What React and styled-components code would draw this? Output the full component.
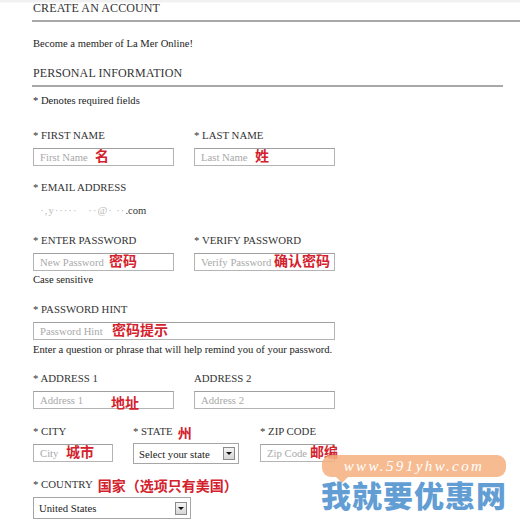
import React from 'react';
import styled, { createGlobalStyle } from 'styled-components';

const GlobalStyle = createGlobalStyle`
  html, body {
    margin: 0;
    padding: 0;
    background: #ffffff;
  }
`;

const Page = styled.div`
  position: relative;
  width: 520px;
  height: 519px;
  overflow: hidden;
  padding-left: 33px;
  box-sizing: border-box;
  font-family: 'Liberation Serif', 'Times New Roman', serif;
  color: #2b2b2b;
  background: linear-gradient(#f1f1f1 0, #f1f1f1 2px, #ffffff 3px);
`;

const SectionTitle = styled.h2`
  margin: 0 ${(p) => p.$right || 0}px 0 -1px;
  padding: ${(p) => p.$top || 0}px 0 5px 1px;
  font-size: 12px;
  font-weight: normal;
  letter-spacing: 0.1px;
  text-transform: uppercase;
  color: #333;
  border-bottom: 2px solid #a8a8a8;
  line-height: 14px;
`;

const Note = styled.p`
  margin: ${(p) => p.$top || 0}px 0 0 0;
  font-size: 10.6px;
  line-height: 12px;
  color: #222;
  white-space: nowrap;
`;

const Row = styled.div`
  display: grid;
  grid-template-columns: ${(p) => p.$cols || '161px 161px'};
  margin-top: ${(p) => p.$top || 0}px;
`;

const Field = styled.div`
  display: flex;
  flex-direction: column;
`;

const Label = styled.label`
  font-size: 10.8px;
  line-height: 13px;
  color: #333;
  white-space: nowrap;
  display: flex;
  align-items: center;
  height: 13px;
`;

const Input = styled.div`
  position: relative;
  box-sizing: border-box;
  width: ${(p) => p.$w || 141}px;
  height: 18px;
  margin-top: 6px;
  border: 1px solid #b4b4b4;
  border-top-color: #a0a0a0;
  padding-left: 6px;
  font-size: 10.7px;
  line-height: 16px;
  color: #a9a9a9;
  white-space: nowrap;
`;

const Annotation = styled.span`
  position: absolute;
  left: ${(p) => p.$left}px;
  top: ${(p) => p.$top || -1}px;
  font-family: 'Noto Sans CJK SC', sans-serif;
  font-weight: 700;
  font-size: ${(p) => p.$size || 14}px;
  line-height: 1;
  color: #d3222d;
  white-space: nowrap;
`;

const InlineNote = styled.span`
  margin-left: 5px;
  font-family: 'Noto Sans CJK SC', sans-serif;
  font-weight: 700;
  font-size: 14px;
  line-height: 1;
  color: #d3222d;
`;

const Select = styled.div`
  box-sizing: border-box;
  display: flex;
  align-items: center;
  justify-content: space-between;
  width: ${(p) => p.$w}px;
  height: ${(p) => p.$h || 21}px;
  margin-top: ${(p) => p.$top || 6}px;
  padding: 0 3px 0 5px;
  border: 1px solid #a6a6a6;
  font-size: 10.7px;
  color: #222;
  white-space: nowrap;
`;

const DropButton = styled.span`
  box-sizing: border-box;
  width: 12px;
  height: 13px;
  border: 1px solid #8a8a8a;
  background: linear-gradient(#f4f4f4, #d6d6d6);
  display: flex;
  align-items: center;
  justify-content: center;

  &::after {
    content: '';
    border-left: 3px solid transparent;
    border-right: 3px solid transparent;
    border-top: 3px solid #111;
  }
`;

const EmailValue = styled.div`
  margin-top: 11px;
  font-size: 10.6px;
  line-height: 12px;
  color: #333;
`;

const Faded = styled.span`
  color: #b9b9b9;
  letter-spacing: 1px;
`;

const Watermark = styled.div`
  position: absolute;
  left: 322px;
  top: 455px;
  width: 184px;
  display: flex;
  flex-direction: column;
  align-items: center;
`;

const Bubble = styled.div`
  position: relative;
  box-sizing: border-box;
  width: 184px;
  height: 22px;
  border-radius: 9px;
  background: rgba(244, 175, 125, 0.85);
  color: #ffffff;
  font-family: 'Liberation Serif', serif;
  font-style: italic;
  font-size: 15px;
  letter-spacing: 2.4px;
  line-height: 22px;
  text-align: center;

  &::after {
    content: '';
    position: absolute;
    left: 14px;
    bottom: -6px;
    border-left: 6px solid transparent;
    border-right: 6px solid transparent;
    border-top: 6px solid rgba(244, 175, 125, 0.85);
  }
`;

const BrandText = styled.div`
  font-family: 'Noto Sans CJK SC', sans-serif;
  font-weight: 900;
  font-size: 30px;
  letter-spacing: 1px;
  line-height: 34px;
  color: rgba(70, 140, 205, 0.85);
  white-space: nowrap;
`;

export default function App() {
  return (
    <Page>
      <GlobalStyle />
      <SectionTitle $top={1}>Create an Account</SectionTitle>
      <Note $top={16}>Become a member of La Mer Online!</Note>
      <SectionTitle $top={16} $right={17}>Personal Information</SectionTitle>
      <Note $top={8}>* Denotes required fields</Note>

      <Row $top={22}>
        <Field>
          <Label>* FIRST NAME</Label>
          <Input>
            First Name
            <Annotation $left={61}>名</Annotation>
          </Input>
        </Field>
        <Field>
          <Label>* LAST NAME</Label>
          <Input>
            Last Name
            <Annotation $left={60}>姓</Annotation>
          </Input>
        </Field>
      </Row>

      <Row $top={15} $cols="322px">
        <Field>
          <Label>* EMAIL ADDRESS</Label>
          <EmailValue>
            <Faded>&nbsp;&nbsp;·,y·····&nbsp;&nbsp;&nbsp;··@·&nbsp;··</Faded>.com
          </EmailValue>
        </Field>
      </Row>

      <Row $top={17}>
        <Field>
          <Label>* ENTER PASSWORD</Label>
          <Input>
            New Password
            <Annotation $left={75}>密码</Annotation>
          </Input>
          <Note $top={3}>Case sensitive</Note>
        </Field>
        <Field>
          <Label>* VERIFY PASSWORD</Label>
          <Input>
            Verify Password
            <Annotation $left={79}>确认密码</Annotation>
          </Input>
        </Field>
      </Row>

      <Row $top={17} $cols="322px">
        <Field>
          <Label>* PASSWORD HINT</Label>
          <Input $w={302}>
            Password Hint
            <Annotation $left={78}>密码提示</Annotation>
          </Input>
          <Note $top={4}>Enter a question or phrase that will help remind you of your password.</Note>
        </Field>
      </Row>

      <Row $top={16}>
        <Field>
          <Label>* ADDRESS 1</Label>
          <Input>
            Address 1
            <Annotation $left={77} $top={3}>地址</Annotation>
          </Input>
        </Field>
        <Field>
          <Label>ADDRESS 2</Label>
          <Input>Address 2</Input>
        </Field>
      </Row>

      <Row $top={16} $cols="100px 127px 120px">
        <Field>
          <Label>* CITY</Label>
          <Input $w={80}>
            City
            <Annotation $left={32}>城市</Annotation>
          </Input>
        </Field>
        <Field>
          <Label>
            * STATE<InlineNote>州</InlineNote>
          </Label>
          <Select $w={106} $top={5}>
            Select your state
            <DropButton />
          </Select>
        </Field>
        <Field>
          <Label>* ZIP CODE</Label>
          <Input $w={75}>
            Zip Code
            <Annotation $left={49}>邮编</Annotation>
          </Input>
        </Field>
      </Row>

      <Row $top={14} $cols="322px">
        <Field>
          <Label>
            * COUNTRY<InlineNote>国家（选项只有美国）</InlineNote>
          </Label>
          <Select $w={158} $top={6} $h={22}>
            United States
            <DropButton />
          </Select>
        </Field>
      </Row>

      <Watermark>
        <Bubble>www.591yhw.com</Bubble>
        <BrandText>我就要优惠网</BrandText>
      </Watermark>
    </Page>
  );
}
